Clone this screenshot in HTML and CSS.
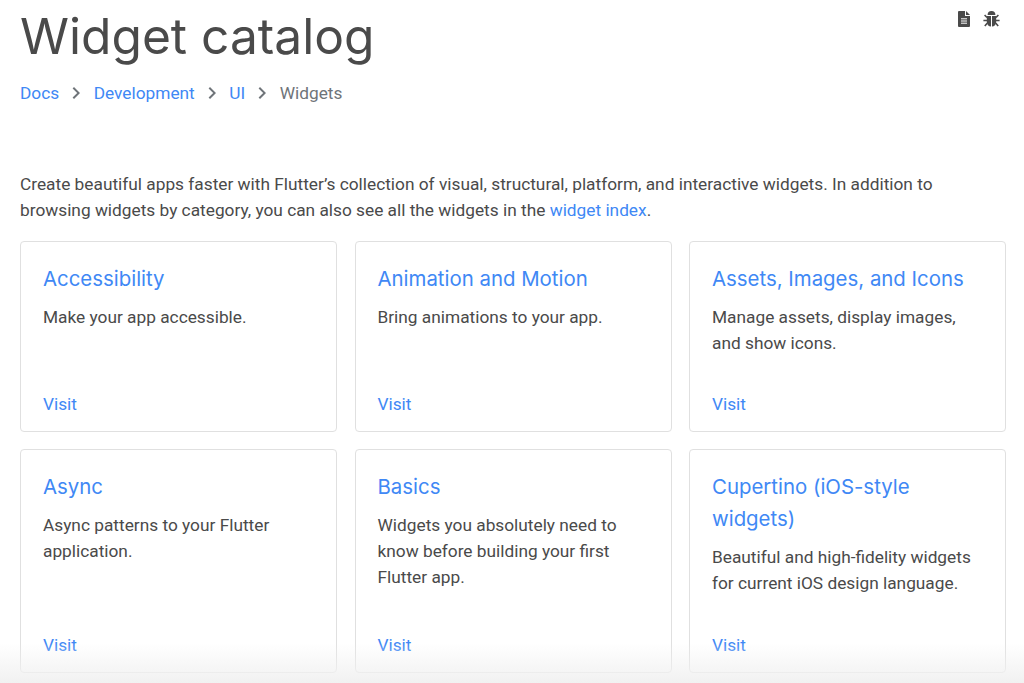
FILE: index.html
```html
<!DOCTYPE html>
<html lang="en">
<head>
<meta charset="UTF-8">
<meta name="viewport" content="width=device-width, initial-scale=1.0">
<title>Widget catalog</title>
<link rel="stylesheet" href="styles.css">
</head>
<body>
<div class="page-actions">
  <svg class="file-icon" viewBox="0 0 12 16"><path d="M0 1a1 1 0 0 1 1-1h6v5h5v10a1 1 0 0 1-1 1H1a1 1 0 0 1-1-1zM8 0l4 4H8z"/><path class="icon-lines" d="M3 7.8h6M3 10h6M3 12.2h6"/></svg>
  <svg class="bug-icon" viewBox="0 0 17 16"><path d="M4.6 4a3.900 4 0 0 1 7.800 0zM3.800 5H8v10.500c-2.400 0-4.200-2-4.200-5zM13.200 5H9v10.500c2.400 0 4.200-2 4.200-5z"/><path class="bug-legs" d="M4 6.500 1.600 4M4 9.500H.4M4.400 12l-2.600 3M13 6.500 15.400 4M13 9.500h3.600M12.600 12l2.600 3"/></svg>
</div>
<h1>Widget catalog</h1>
<nav class="breadcrumb">
  <a href="#">Docs</a>
  <svg class="chevron" viewBox="0 0 24 24"><path d="M8.6 16.6 13.2 12 8.600 7.400 10 6l6 6-6 6z"/></svg>
  <a href="#">Development</a>
  <svg class="chevron" viewBox="0 0 24 24"><path d="M8.6 16.6 13.2 12 8.600 7.400 10 6l6 6-6 6z"/></svg>
  <a href="#">UI</a>
  <svg class="chevron" viewBox="0 0 24 24"><path d="M8.6 16.6 13.2 12 8.600 7.400 10 6l6 6-6 6z"/></svg>
  <span class="current">Widgets</span>
</nav>
<p class="intro">Create beautiful apps faster with Flutter’s collection of visual, structural, platform, and interactive widgets. In addition to browsing widgets by category, you can also see all the widgets in the <a href="#">widget index</a>.</p>
<div class="card-grid">
  <div class="card">
    <h2><a href="#">Accessibility</a></h2>
    <p>Make your app accessible.</p>
    <a class="visit" href="#">Visit</a>
  </div>
  <div class="card">
    <h2><a href="#">Animation and Motion</a></h2>
    <p>Bring animations to your app.</p>
    <a class="visit" href="#">Visit</a>
  </div>
  <div class="card">
    <h2><a href="#">Assets, Images, and Icons</a></h2>
    <p>Manage assets, display images, and show icons.</p>
    <a class="visit" href="#">Visit</a>
  </div>
  <div class="card">
    <h2><a href="#">Async</a></h2>
    <p>Async patterns to your Flutter application.</p>
    <a class="visit" href="#">Visit</a>
  </div>
  <div class="card">
    <h2><a href="#">Basics</a></h2>
    <p>Widgets you absolutely need to know before building your first Flutter app.</p>
    <a class="visit" href="#">Visit</a>
  </div>
  <div class="card">
    <h2><a href="#">Cupertino (iOS-style widgets)</a></h2>
    <p>Beautiful and high-fidelity widgets for current iOS design language.</p>
    <a class="visit" href="#">Visit</a>
  </div>
</div>
<div class="bottom-fade"></div>
</body>
</html>
```

FILE: styles.css
```css
html, body {
  height: 683px;
  overflow: hidden;
}

body {
  margin: 0;
  padding: 0 18px 0 20px;
  background-color: #fff;
  color: #4a4a4a;
  font-family: Roboto, "Liberation Sans", sans-serif;
  font-size: 17.3px;
  line-height: 26px;
}

a {
  color: #4088f5;
  text-decoration: none;
}

h1 {
  margin: 0;
  padding-top: 6px;
  font-family: Inter, sans-serif;
  font-size: 49.7px;
  font-weight: 400;
  line-height: 60px;
  color: #4a4a4a;
}

.page-actions {
  position: absolute;
  top: 11px;
  right: 24px;
  display: flex;
  gap: 13px;
}

.file-icon {
  width: 12px;
  height: 16px;
  fill: #4a4a4a;
}

.icon-lines {
  fill: none;
  stroke: #fff;
  stroke-width: 1;
}

.bug-icon {
  width: 17px;
  height: 16px;
  fill: #4a4a4a;
}

.bug-legs {
  fill: none;
  stroke: #4a4a4a;
  stroke-width: 1.6;
}

.breadcrumb {
  display: flex;
  align-items: center;
  margin-top: 14px;
  height: 26px;
}

.chevron {
  width: 24px;
  height: 24px;
  margin: 0 5.25px;
  fill: #6f7479;
}

.current {
  color: #6f7479;
}

.intro {
  margin: 65px 0 18px;
}

.card-grid {
  display: grid;
  grid-template-columns: repeat(3, 1fr);
  grid-template-rows: 191px 224px;
  gap: 17px 17.5px;
}

.card {
  display: flex;
  flex-direction: column;
  padding: 21px 22px 14.5px;
  border: 1px solid #e0e0e0;
  border-radius: 4px;
}

.card h2 {
  margin: 0 0 8.5px;
  font-family: Inter, sans-serif;
  font-size: 20.4px;
  font-weight: 400;
  line-height: 32px;
}

.card p {
  margin: 0;
}

.visit {
  margin-top: auto;
}

.bottom-fade {
  position: absolute;
  left: 0;
  right: 0;
  top: 643px;
  height: 40px;
  background: linear-gradient(rgba(241, 241, 241, 0), #f1f1f1);
  pointer-events: none;
}
```
